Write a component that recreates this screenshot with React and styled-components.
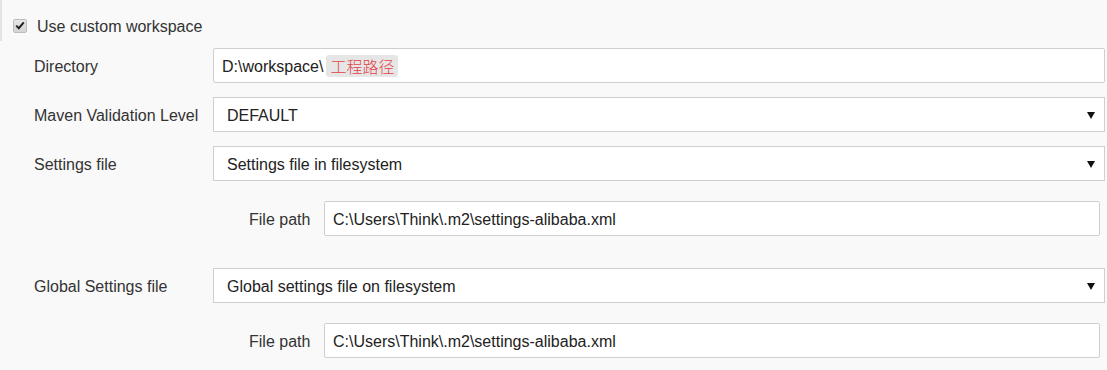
import React from "react";
import styled, { createGlobalStyle } from "styled-components";

const GlobalStyle = createGlobalStyle`
  html, body {
    margin: 0;
    padding: 0;
    background: #f9f9f9;
  }
  body {
    font-family: "Liberation Sans", Arial, "Noto Sans CJK SC", sans-serif;
    color: #333;
  }
`;

const Page = styled.div`
  width: 1107px;
  height: 370px;
  overflow: hidden;
  background: #f9f9f9;
`;

const CheckRow = styled.label`
  display: flex;
  align-items: center;
  gap: 10px;
  height: 41px;
  padding: 10px 0 0 13px;
  border-left: 2px solid #e3e3e3;
  margin-bottom: 7px;
  box-sizing: border-box;
  width: 300px;
  font-size: 16px;
  color: #333;

  span.text {
    padding-top: 2px;
  }
`;

const Box = styled.span`
  width: 12px;
  height: 12px;
  border: 1px solid #bdbdbd;
  border-radius: 2px;
  background: linear-gradient(#e6e6e6, #d4d4d4);
  display: flex;
  align-items: center;
  justify-content: center;
  margin-left: -2px;
`;

const Section = styled.div`
  display: flex;
  flex-direction: column;
  padding-left: 34px;
  padding-right: 2px;
`;

const Row = styled.div`
  display: grid;
  grid-template-columns: ${(p) => p.$labelWidth || "179px"} 1fr;
  align-items: center;
  margin-left: ${(p) => p.$indent || "0px"};
  margin-right: ${(p) => p.$inset || "0px"};
  margin-top: ${(p) => p.$gap || "0px"};
`;

const Label = styled.div`
  font-size: 16px;
  color: #333;
  padding-top: 2px;
`;

const TextBox = styled.div`
  height: 35px;
  box-sizing: border-box;
  border: 1px solid #cfcfcf;
  border-radius: 2px;
  background: #fff;
  padding: 2px 8px 0;
  display: flex;
  align-items: center;
  font-size: 16px;
  color: #222;
  white-space: nowrap;
`;

const Highlight = styled.span`
  background: #e6e6e6;
  color: #e24446;
  padding: 0 4px;
  margin-left: 3px;
  border-radius: 3px;
  font-family: "Noto Sans CJK SC", sans-serif;
  font-weight: 300;
  font-size: 16px;
  line-height: 22px;
  margin-top: -2px;
`;

const SelectBox = styled.div`
  position: relative;
  height: 35px;
  box-sizing: border-box;
  border: 1px solid #cfcfcf;
  background: #fff;
  padding: 2px 13px 0;
  display: flex;
  align-items: center;
  font-size: 16px;
  color: #222;

  &::after {
    content: "";
    position: absolute;
    right: 9px;
    top: 14px;
    border-left: 4px solid transparent;
    border-right: 4px solid transparent;
    border-top: 7px solid #111;
  }
`;

function Check() {
  return (
    <Box>
      <svg width="10" height="9" viewBox="0 0 10 9">
        <path d="M1.2 4.6 L3.8 7.2 L8.8 1.4" fill="none" stroke="#222" strokeWidth="2" />
      </svg>
    </Box>
  );
}

export default function App() {
  return (
    <Page>
      <GlobalStyle />
      <CheckRow>
        <Check />
        <span className="text">Use custom workspace</span>
      </CheckRow>
      <Section>
        <Row>
          <Label>Directory</Label>
          <TextBox>
            D:\workspace\<Highlight>工程路径</Highlight>
          </TextBox>
        </Row>
        <Row $gap="14px">
          <Label>Maven Validation Level</Label>
          <SelectBox>DEFAULT</SelectBox>
        </Row>
        <Row $gap="14px">
          <Label>Settings file</Label>
          <SelectBox>Settings file in filesystem</SelectBox>
        </Row>
        <Row $gap="20px" $indent="215px" $labelWidth="75px" $inset="5px">
          <Label>File path</Label>
          <TextBox>C:\Users\Think\.m2\settings-alibaba.xml</TextBox>
        </Row>
        <Row $gap="32px">
          <Label>Global Settings file</Label>
          <SelectBox>Global settings file on filesystem</SelectBox>
        </Row>
        <Row $gap="20px" $indent="215px" $labelWidth="75px" $inset="5px">
          <Label>File path</Label>
          <TextBox>C:\Users\Think\.m2\settings-alibaba.xml</TextBox>
        </Row>
      </Section>
    </Page>
  );
}
